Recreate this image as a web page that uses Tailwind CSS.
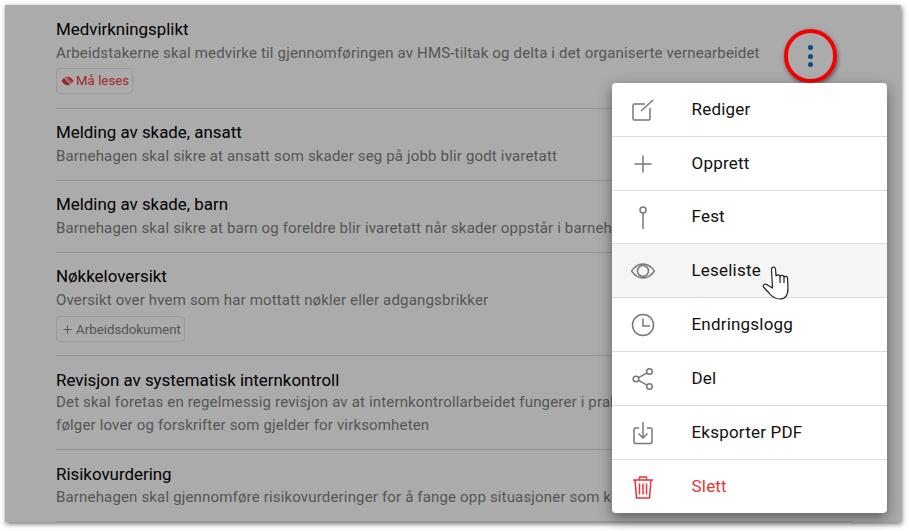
<!DOCTYPE html>
<html lang="en">
<head>
    <meta charset="UTF-8">
    <title>Rutiner</title>
    <script src="https://cdn.jsdelivr.net/npm/@tailwindcss/browser@4"></script>
</head>
<body class="bg-white font-['Roboto',sans-serif] w-[909px] h-[531px] overflow-hidden relative">

    <!-- Dimmed card -->
    <div class="absolute left-[5px] top-[5px] w-[896px] h-[517px] bg-[#ababab] overflow-hidden shadow-[1px_2px_5px_rgba(0,0,0,0.55)]">
        <ul class="ml-[51px] w-[797px] pt-px">
            <li class="pt-[11px] border-b border-[#939393] h-[103px]">
                <p class="text-[16.900px] leading-6 text-black">Medvirkningsplikt</p>
                <p class="mt-px text-[15px] tracking-[0.165px] leading-[23px] text-[#555] whitespace-nowrap">Arbeidstakerne skal medvirke til gjennomføringen av HMS-tiltak og delta i det organiserte vernearbeidet</p>
                <span class="mt-[3px] h-[26px] w-[77px] inline-flex items-center gap-[2px] px-[4px] rounded border border-[#999] text-[13.300px] text-[#a4262c] whitespace-nowrap">
                    <svg class="w-[13px] h-[12px] shrink-0" viewBox="0 0 14 12" fill="#9c2a30"><path d="M0.500 6C2.500 3 4.500 1.500 7 1.500S11.500 3 13.500 6C11.500 9 9.500 10.500 7 10.500S2.500 9 0.500 6Z"/><path d="M2 0.500L12.500 11.500" stroke="#ababab" stroke-width="1.200"/><path d="M5 1L13 9" stroke="#ababab" stroke-width="0.800"/></svg>
                    Må leses
                </span>
            </li>
            <li class="pt-[11px] border-b border-[#939393] h-[72px]">
                <p class="text-[16.900px] leading-6 text-black">Melding av skade, ansatt</p>
                <p class="mt-px text-[15px] tracking-[0.165px] leading-[23px] text-[#555] whitespace-nowrap">Barnehagen skal sikre at ansatt som skader seg på jobb blir godt ivaretatt</p>
            </li>
            <li class="pt-[11px] border-b border-[#939393] h-[72px]">
                <p class="text-[16.900px] leading-6 text-black">Melding av skade, barn</p>
                <p class="mt-px w-[556px] overflow-hidden text-[15px] tracking-[0.165px] leading-[23px] text-[#555] whitespace-nowrap">Barnehagen skal sikre at barn og foreldre blir ivaretatt når skader oppstår i barnehagen</p>
            </li>
            <li class="pt-[11px] border-b border-[#939393] h-[103px]">
                <p class="text-[16.900px] leading-6 text-black">Nøkkeloversikt</p>
                <p class="mt-px text-[15px] tracking-[0.165px] leading-[23px] text-[#555] whitespace-nowrap">Oversikt over hvem som har mottatt nøkler eller adgangsbrikker</p>
                <span class="mt-[4px] h-[26px] w-[129px] inline-flex items-center gap-[4px] pl-[6px] pt-px rounded border border-[#999] text-[13.300px] text-[#555] whitespace-nowrap">
                    <svg class="w-[9px] h-[9px] shrink-0" viewBox="0 0 9 9" fill="none" stroke="#555" stroke-width="1"><path d="M4.500 0.500V8.500M0.500 4.500H8.500"/></svg>
                    Arbeidsdokument
                </span>
            </li>
            <li class="pt-3 border-b border-[#939393] h-[94px]">
                <p class="text-[16.900px] leading-6 text-black">Revisjon av systematisk internkontroll</p>
                <p class="-mt-px w-[556px] overflow-hidden text-[15px] tracking-[0.165px] leading-[23px] text-[#555] whitespace-nowrap">Det skal foretas en regelmessig revisjon av at internkontrollarbeidet fungerer i praksis og at virksomheten<br>følger lover og forskrifter som gjelder for virksomheten</p>
            </li>
            <li class="pt-3 border-b border-[#939393] h-[72px]">
                <p class="text-[16.900px] leading-6 text-black">Risikovurdering</p>
                <p class="w-[556px] overflow-hidden text-[15px] tracking-[0.165px] leading-[23px] text-[#555] whitespace-nowrap">Barnehagen skal gjennomføre risikovurderinger for å fange opp situasjoner som kan føre til skade</p>
            </li>
        </ul>
    </div>

    <!-- Three dots and red annotation ring -->
    <div class="absolute left-[784px] top-[29px] w-[53px] h-[54px] rounded-full border-[4.500px] border-[#f40000] shadow-[1px_2px_4px_rgba(0,0,0,0.5)] flex flex-col items-center justify-center gap-[3.500px]">
        <span class="w-[5px] h-[5px] rounded-full bg-[#0a4f7d]"></span>
        <span class="w-[5px] h-[5px] rounded-full bg-[#0a4f7d]"></span>
        <span class="w-[5px] h-[5px] rounded-full bg-[#0a4f7d]"></span>
    </div>

    <!-- Context menu -->
    <div class="absolute left-[612px] top-[83px] w-[275px] h-[430px] bg-white rounded shadow-[0_5px_14px_rgba(0,0,0,0.45)] flex flex-col overflow-hidden text-[17px] tracking-[0.2px] text-[#111]">
        <div class="h-[54px] flex items-center border-b border-[#dcdcdc]">
            <div class="w-[79.500px] pl-[19px]">
                <svg class="w-6 h-6" viewBox="0 0 24 24" fill="none" stroke="#777" stroke-width="1.500"><path d="M14 6H3.500A1.500 1.500 0 0 0 2 7.500V20.500A1.500 1.500 0 0 0 3.500 22H17.500A1.500 1.500 0 0 0 19 20.500V10"/><path d="M10 13L22 2"/></svg>
            </div>
            <span>Rediger</span>
        </div>
        <div class="h-[54px] flex items-center border-b border-[#dcdcdc]">
            <div class="w-[79.500px] pl-[19px]">
                <svg class="w-6 h-6" viewBox="0 0 24 24" fill="none" stroke="#777" stroke-width="1.500"><path d="M12 3.500V20.500M3.500 12H20.500"/></svg>
            </div>
            <span>Opprett</span>
        </div>
        <div class="h-[53px] flex items-center border-b border-[#dcdcdc]">
            <div class="w-[79.500px] pl-[19px]">
                <svg class="w-6 h-6" viewBox="0 0 24 24" fill="none" stroke="#777" stroke-width="1.500"><circle cx="12" cy="5" r="3"/><path d="M12 8V24"/></svg>
            </div>
            <span>Fest</span>
        </div>
        <div class="h-[54px] flex items-center border-b border-[#dcdcdc] bg-[#f5f5f5]">
            <div class="w-[79.500px] pl-[19px]">
                <svg class="w-6 h-6" viewBox="0 0 24 24" fill="none" stroke="#777" stroke-width="1.500"><path d="M0.500 12C4 7 8 5 12 5S20 7 23.500 12C20 17 16 19 12 19S4 17 0.500 12Z"/><circle cx="12" cy="12" r="5.500"/></svg>
            </div>
            <span>Leseliste</span>
        </div>
        <div class="h-[54px] flex items-center border-b border-[#dcdcdc]">
            <div class="w-[79.500px] pl-[19px]">
                <svg class="w-6 h-6" viewBox="0 0 24 24" fill="none" stroke="#777" stroke-width="1.500"><circle cx="12" cy="12" r="10.500"/><path d="M12 5.500V13H19"/></svg>
            </div>
            <span>Endringslogg</span>
        </div>
        <div class="h-[54px] flex items-center border-b border-[#dcdcdc]">
            <div class="w-[79.500px] pl-[19px]">
                <svg class="w-6 h-6" viewBox="0 0 24 24" fill="none" stroke="#777" stroke-width="1.500"><circle cx="18.500" cy="4.500" r="2.800"/><circle cx="5" cy="12" r="2.800"/><circle cx="18.500" cy="19.500" r="2.800"/><path d="M7.500 10.600L16 5.900M7.500 13.400L16 18.100"/></svg>
            </div>
            <span>Del</span>
        </div>
        <div class="h-[54px] flex items-center border-b border-[#dcdcdc]">
            <div class="w-[79.500px] pl-[19px]">
                <svg class="w-6 h-6" viewBox="0 0 24 24" fill="none" stroke="#777" stroke-width="1.500"><path d="M8 7H4.500A1.500 1.500 0 0 0 3 8.500V21A1.500 1.500 0 0 0 4.500 22.500H19.500A1.500 1.500 0 0 0 21 21V8.500A1.500 1.500 0 0 0 19.500 7H16"/><path d="M12 1V17M7.500 12.500L12 17L16.500 12.500"/></svg>
            </div>
            <span>Eksporter PDF</span>
        </div>
        <div class="flex-1 flex items-center">
            <div class="w-[79.500px] pl-[19px]">
                <svg class="w-6 h-6" viewBox="0 0 24 24" fill="none" stroke="#e53535" stroke-width="1.500"><path d="M2 5H22M8.500 5V2H15.500V5M4 5L5.500 23H18.500L20 5M8.500 8.500V19.500M12 8.500V19.500M15.500 8.500V19.500"/></svg>
            </div>
            <span class="text-[#e53535]">Slett</span>
        </div>
    </div>

    <!-- Hand cursor -->
    <svg class="absolute left-[762px] top-[266px] w-[28px] h-[34px]" viewBox="0 0 28 34" fill="white" stroke="#222" stroke-width="1.200" stroke-linejoin="round"><path d="M9.500 3C9.500 0.500 13 0.500 13.500 3L14 10C15 8.500 17.500 8.500 18 10.500C19 9 21.500 9 22 11C23 10 25.500 10 25.500 12L26 22C26 28 24 33 18 33C13 33 10 31 7 27L1.500 21C0.500 19 2.500 17.500 4.500 18.500L10.500 22Z"/><path d="M18 10.500V17M22 11V17" fill="none"/></svg>

</body>
</html>
